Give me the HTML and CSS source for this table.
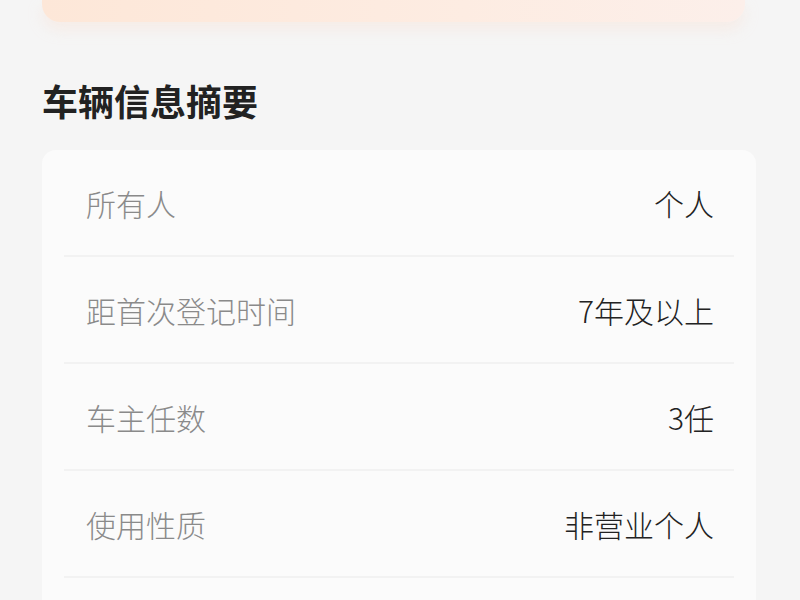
FILE: index.html
```html
<!DOCTYPE html>
<html lang="zh-CN">
<head>
  <meta charset="UTF-8">
  <meta name="viewport" content="width=device-width, initial-scale=1.0">
  <title>车辆信息摘要</title>

  <link rel="stylesheet" href="styles.css">
</head>
<body>
  <div id="page">
    <div class="banner"></div>

    <h2 class="section_title">车辆信息摘要</h2>

    <div class="info_card">
      <div class="info_row">
        <span class="label">所有人</span>
        <span class="value">个人</span>
      </div>
      <div class="info_row">
        <span class="label">距首次登记时间</span>
        <span class="value">7年及以上</span>
      </div>
      <div class="info_row">
        <span class="label">车主任数</span>
        <span class="value">3任</span>
      </div>
      <div class="info_row">
        <span class="label">使用性质</span>
        <span class="value">非营业个人</span>
      </div>
      <div class="info_row">
        <span class="label"></span>
        <span class="value"></span>
      </div>
    </div>
  </div>
</body>
</html>
```

FILE: styles.css
```css
body{
  margin: 0;
  background-color: #f5f5f5;
  font-family: "Noto Sans CJK SC", "Noto Sans", sans-serif;
  overflow: hidden;
}

#page{
  padding: 0 44px 0 42px;
}

.banner{
  height: 22px;
  margin-right: 11px;
  border-radius: 0 0 18px 18px;
  background: linear-gradient(90deg, #fde7d8, #fdece2 60%, #fcefea);
  box-shadow: 0 8px 14px rgba(250, 220, 205, 0.35);
}

.section_title{
  margin: 53px 0 0;
  font-size: 36px;
  line-height: 50px;
  font-weight: bold;
  color: #222;
}

.info_card{
  margin-top: 25px;
  background-color: #fbfbfb;
  border-radius: 14px;
}

.info_row{
  display: flex;
  justify-content: space-between;
  align-items: center;
  height: 107px;
  margin: 0 22px;
  padding: 0 20px 0 22px;
  border-bottom: 2px solid #f2f2f2;
  box-sizing: border-box;
  font-size: 30px;
  font-weight: 300;
}

.label{
  color: #8a8a8a;
}

.value{
  color: #222;
}
```
